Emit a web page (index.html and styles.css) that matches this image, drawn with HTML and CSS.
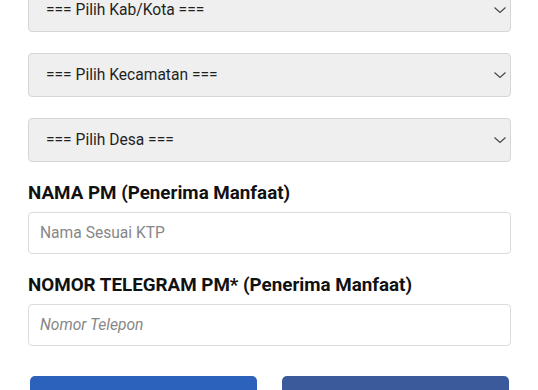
FILE: index.html
```html
<!doctype html>
<html lang="id">
    <head>
        <meta charset="UTF-8" />
        <meta name="viewport" content="width=device-width, initial-scale=1.0" />
        <title>Form Penerima Manfaat</title>
        <link rel="stylesheet" href="styles.css">
    </head>
    <body>
        <form class="form">
            <div class="select-wrap">
                <select class="select">
                    <option>=== Pilih Kab/Kota ===</option>
                </select>
                <svg class="chevron" viewBox="0 0 12 6"><path d="M0.5 0.5 L6 5.5 L11.5 0.5"></path></svg>
            </div>

            <div class="select-wrap">
                <select class="select">
                    <option>=== Pilih Kecamatan ===</option>
                </select>
                <svg class="chevron" viewBox="0 0 12 6"><path d="M0.5 0.5 L6 5.5 L11.5 0.5"></path></svg>
            </div>

            <div class="select-wrap">
                <select class="select">
                    <option>=== Pilih Desa ===</option>
                </select>
                <svg class="chevron" viewBox="0 0 12 6"><path d="M0.5 0.5 L6 5.5 L11.5 0.5"></path></svg>
            </div>

            <label class="label">NAMA PM (Penerima Manfaat)</label>
            <input class="input" type="text" placeholder="Nama Sesuai KTP" />

            <label class="label">NOMOR TELEGRAM PM* (Penerima Manfaat)</label>
            <input class="input input-phone" type="tel" placeholder="Nomor Telepon" />

            <div class="actions">
                <button type="submit" class="btn btn-primary" aria-label="Simpan"></button>
                <button type="button" class="btn btn-fb" aria-label="Kembali"></button>
            </div>
        </form>
    </body>
</html>
```

FILE: styles.css
```css
* {
    margin: 0;
    padding: 0;
    box-sizing: border-box;
}

body {
    font-family: Roboto, "Liberation Sans", sans-serif;
    background: #fff;
    color: #1a1a1a;
    overflow: hidden;
}

.form {
    padding: 0 27px 0 28px;
    margin-top: -12px;
}

.select-wrap {
    position: relative;
    margin-bottom: 21px;
}

.select {
    appearance: none;
    -webkit-appearance: none;
    display: block;
    width: 100%;
    height: 44px;
    padding: 0 40px 0 17px;
    font-family: inherit;
    font-size: 15.6px;
    color: #1f1f1f;
    background: #efefef;
    border: 1px solid #d6d6d6;
    border-radius: 4px;
}

.chevron {
    position: absolute;
    right: 5px;
    top: 19px;
    width: 12px;
    height: 6px;
    fill: none;
    stroke: #444;
    stroke-width: 1.1;
}

.label {
    display: block;
    margin: 19px 0 7px;
    font-size: 18.8px;
    line-height: 24px;
    font-weight: 700;
    color: #111;
}

.select-wrap + .label {
    margin-top: -2px;
}

.input {
    display: block;
    width: 100%;
    height: 42px;
    padding: 0 11px;
    font-family: inherit;
    font-size: 15.6px;
    color: #222;
    background: #fff;
    border: 1px solid #dcdcdc;
    border-radius: 4px;
}

.input::placeholder {
    color: #878787;
}

.input-phone::placeholder {
    font-style: italic;
}

.actions {
    display: grid;
    grid-template-columns: 1fr 1fr;
    gap: 25px;
    padding: 0 2px;
    margin-top: 30px;
}

.btn {
    height: 44px;
    border: none;
    border-radius: 5px;
}

.btn-primary {
    background: #2c62bb;
}

.btn-fb {
    background: #3b5a9c;
}
```
